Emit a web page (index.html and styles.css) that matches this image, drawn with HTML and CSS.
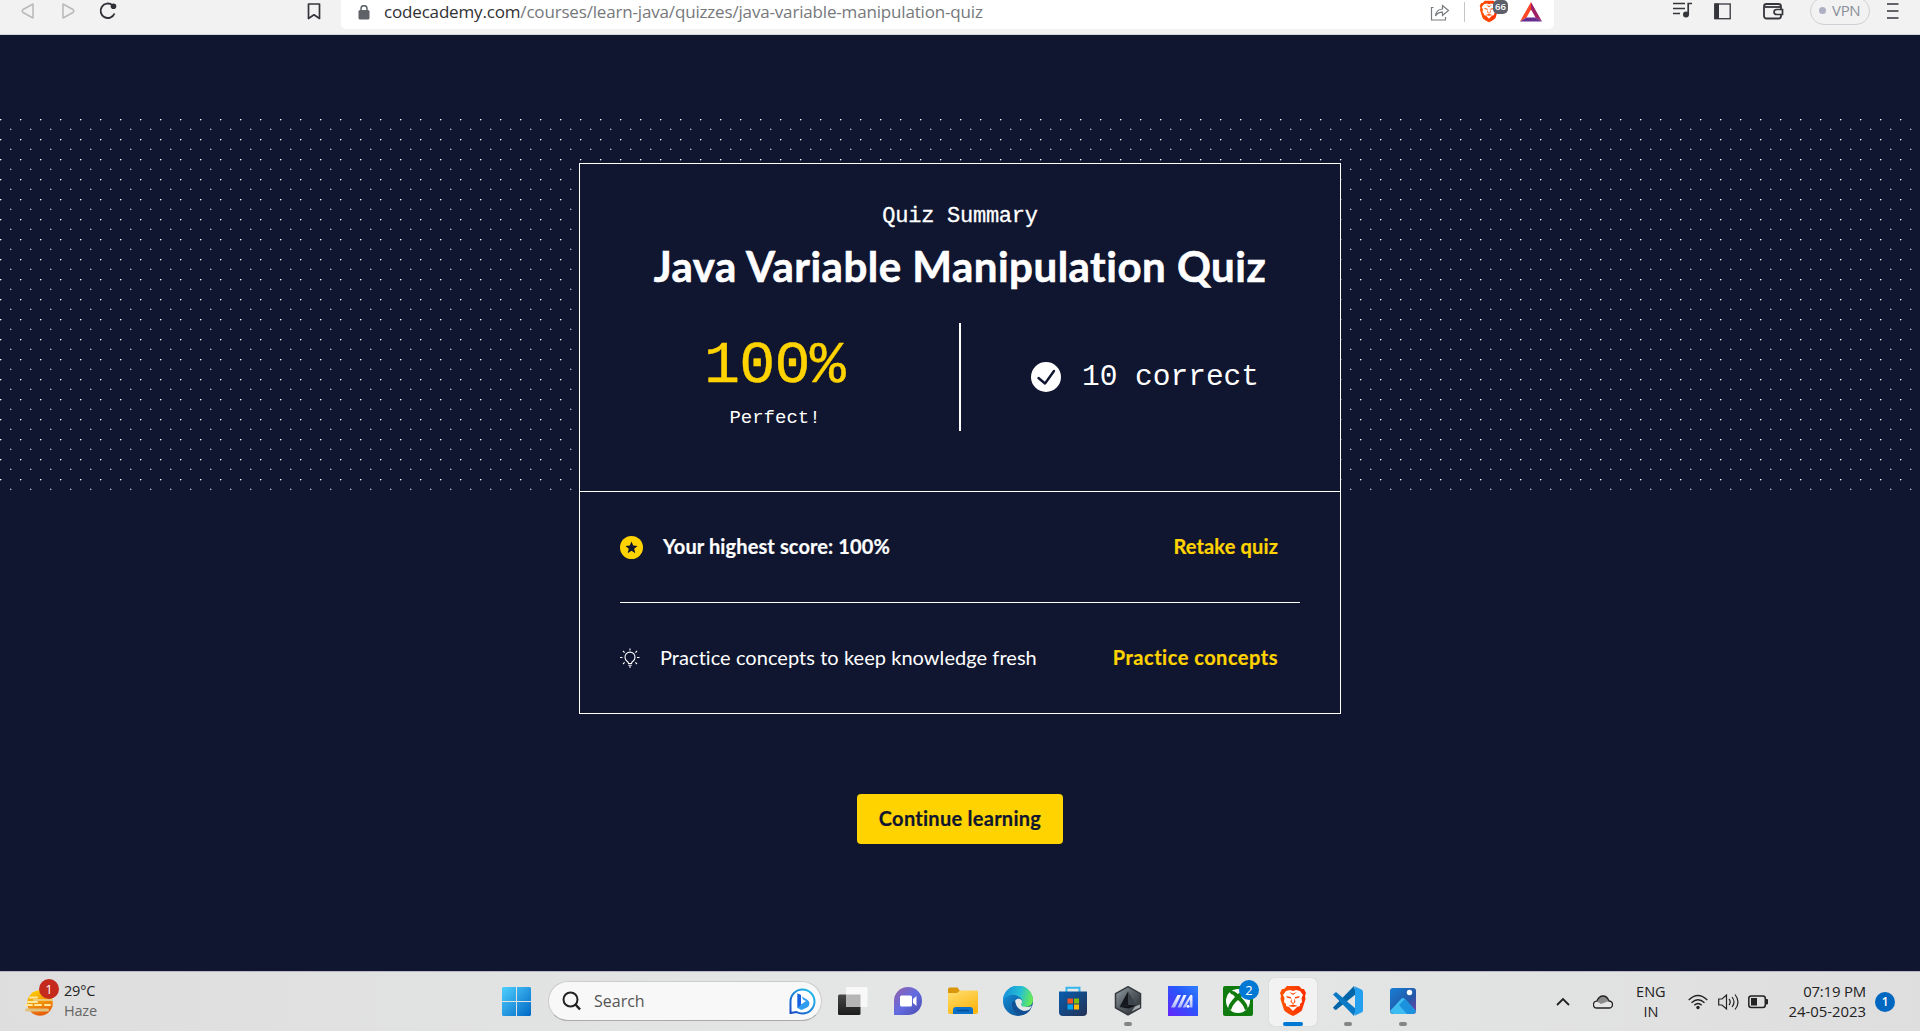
FILE: index.html
```html
<!DOCTYPE html>
<html lang="en">
<head>
<meta charset="utf-8">
<title>Java Variable Manipulation Quiz</title>
<link rel="stylesheet" href="styles.css">
</head>
<body>
<header class="toolbar">
  <nav class="nav-buttons">
    <svg class="ico back" width="14" height="18" viewBox="0 0 14 18"><path d="M12 2v14L2 10.500Q.5 9 2 7.500Z" fill="none" stroke="#b9b9b9" stroke-width="1.500" stroke-linejoin="round"/></svg>
    <svg class="ico forward" width="14" height="18" viewBox="0 0 14 18"><path d="M2 2v14l10-5.500q1.500-1.500 0-3Z" fill="none" stroke="#b9b9b9" stroke-width="1.500" stroke-linejoin="round"/></svg>
    <svg class="ico reload" width="18" height="18" viewBox="0 0 18 18"><path d="M13.500 3.300A7.200 7.200 0 1 0 15.500 11.500" fill="none" stroke="#303136" stroke-width="1.900"/><circle cx="14.500" cy="4.200" r="2.800" fill="#303136"/></svg>
    <svg class="ico bookmark" width="14" height="17" viewBox="0 0 14 17"><path d="M1.500 1h11v14.500L7 11.800l-5.500 3.700Z" fill="none" stroke="#34363b" stroke-width="1.700" stroke-linejoin="round"/></svg>
  </nav>
  <div class="address">
    <svg class="lock" width="12" height="15" viewBox="0 0 12 15"><rect x=".5" y="5" width="11" height="9.500" rx="1.500" fill="#5f6368"/><path d="M3 6V3.700a3 3 0 0 1 6 0V6" fill="none" stroke="#5f6368" stroke-width="1.500"/></svg>
    <span class="url"><span class="host">codecademy.com</span>/courses/learn-java/quizzes/java-variable-manipulation-quiz</span>
    <svg class="share" width="20" height="18" viewBox="0 0 20 18"><path d="M3.500 4.500H1.500v12.500h14V14M5.500 13q.5-6.500 7-7V2.500l6 5-6 5V9.200Q8 9 5.500 13Z" fill="none" stroke="#777a7e" stroke-width="1.200"/></svg>
    <i class="split"></i>
    <div class="shield">
      <svg width="20" height="23" viewBox="1.500 0 27 32"><use href="#lion"/></svg>
      <b>66</b>
    </div>
    <svg class="bat" width="22" height="20" viewBox="0 0 22 20"><path d="M11 0 0 19.500 6.500 15.500 11 7.500Z" fill="#ff4724"/><path d="M11 0 22 19.500 15.500 15.500 11 7.500Z" fill="#9e1f63"/><path d="M0 19.500H22L15.500 15.500H6.500Z" fill="#662d91"/></svg>
  </div>
  <svg class="ico music" width="20" height="17" viewBox="0 0 20 17"><path d="M0 1.500h12M0 6.500h12M0 11.500h7" stroke="#34363b" stroke-width="1.700"/><circle cx="13" cy="12.500" r="3" fill="#34363b"/><path d="M15.200 13V1.500H19" fill="none" stroke="#34363b" stroke-width="1.700"/></svg>
  <svg class="ico panel" width="17" height="17" viewBox="0 0 17 17"><rect x=".8" y="1" width="15.400" height="14.700" fill="none" stroke="#34363b" stroke-width="1.300"/><path d="M.5.500h4.500v15.500H.5Z" fill="#34363b"/></svg>
  <svg class="ico wallet" width="21" height="18" viewBox="0 0 21 18"><rect x="1" y="2" width="17" height="14.500" rx="2.500" fill="none" stroke="#34363b" stroke-width="1.800"/><path d="M2 5h16" stroke="#34363b" stroke-width="1.800"/><path d="M19.500 7.500H14q-3 0-3 2.500t3 2.500h5.500Z" fill="#f2f2f2" stroke="#34363b" stroke-width="1.700"/></svg>
  <div class="vpn"><i></i>VPN</div>
  <svg class="ico menu" width="12" height="17" viewBox="0 0 12 17"><path d="M0 2h11.500M0 9h11.500M0 16h11.500" stroke="#34363b" stroke-width="1.600"/></svg>
</header>

<main class="page">
  <svg class="dots" width="1920" height="374">
    <defs><pattern id="grid" width="20" height="20" patternUnits="userSpaceOnUse"><g fill="#fff"><path d="M0 0h1v1H0Z"/><path d="M1 0h1v1H1ZM0 1h1v1H0Z" opacity=".35"/><path d="M10 10h1v1h-1Z" opacity=".65"/><path d="M10 9h1v1h-1ZM11 10h1v1h-1Z" opacity=".3"/></g></pattern></defs>
    <rect width="1920" height="374" fill="url(#grid)"/>
  </svg>
  <section class="card">
    <div class="summary">
      <p class="eyebrow">Quiz Summary</p>
      <h1>Java Variable Manipulation Quiz</h1>
      <div class="results">
        <div class="score">
          <strong>100%</strong>
          <span>Perfect!</span>
        </div>
        <div class="tally">
          <svg width="30" height="30" viewBox="0 0 30 30"><circle cx="15" cy="15" r="15" fill="#fff"/><path d="m7.500 16 6.500 5.500L23 9" fill="none" stroke="#10162f" stroke-width="2.400" stroke-linecap="round" stroke-linejoin="round"/></svg>
          <span>10 correct</span>
        </div>
      </div>
    </div>
    <div class="row">
      <svg class="star" width="23" height="23" viewBox="0 0 23 23"><circle cx="11.500" cy="11.500" r="11.500" fill="#ffd300"/><path d="m11.500 5.500 1.700 4.100 4.400.300-3.400 2.900 1.100 4.400-3.800-2.400-3.800 2.400 1.100-4.400-3.400-2.900 4.400-.300Z" fill="#10162f"/></svg>
      <span class="label best">Your highest score: 100%</span>
      <a class="retake">Retake quiz</a>
    </div>
    <div class="row second">
      <svg class="bulb" width="20" height="20" viewBox="0 0 20 20" fill="none" stroke="#fff" stroke-width="1.100"><path d="M8.500 15.500q0-1.500-1.700-2.500a5 5 0 1 1 6.400 0q-1.700 1-1.700 2.500Z"/><path d="M8.300 17.300h3.400M9 19h2M10 .500v2M0 9.500h2.500M17 9.500h2.500M3 3l1.600 1.600M17 3l-1.600 1.600M3 16l1.600-1.600M17 16l-1.600-1.600"/></svg>
      <span class="label practice">Practice concepts to keep knowledge fresh</span>
      <a class="concepts">Practice concepts</a>
    </div>
  </section>
  <button class="continue">Continue learning</button>
</main>

<footer class="taskbar">
  <div class="weather">
    <div class="haze">
      <svg width="34" height="40" viewBox="0 0 34 40"><defs><linearGradient id="sun" x1="0" y1="0" x2=".3" y2="1"><stop stop-color="#ffd800"/><stop offset="1" stop-color="#e8620c"/></linearGradient></defs><circle cx="15" cy="21" r="12.800" fill="url(#sun)"/><path d="M5 15.500h7M3 20h9M20 23h5M10 23h6M1 23h6" stroke="#ffe9a0" stroke-width="2" stroke-linecap="round"/><path d="M1.500 28h21" stroke="#dfc27e" stroke-width="3" stroke-linecap="round"/><path d="M8 18h20" stroke="#e9d79d" stroke-width="1.500"/></svg>
      <b class="alert">1</b>
    </div>
    <p>29°C<br><span>Haze</span></p>
  </div>
  <div class="start"><svg width="29" height="29" viewBox="0 0 29 29"><defs><linearGradient id="win" x1="0" y1="0" x2="1" y2="1"><stop stop-color="#4fd0ff"/><stop offset="1" stop-color="#0067c5"/></linearGradient></defs><path d="M1 0h13v14H0V1ZM15 0h13l1 1v13H15ZM0 15h14v14H1l-1-1ZM15 15h14v13l-1 1H15Z" fill="url(#win)"/></svg></div>
  <div class="search">
    <svg width="20" height="20" viewBox="0 0 20 20"><circle cx="8.500" cy="8.500" r="7" fill="none" stroke="#222" stroke-width="2"/><path d="m13.500 13.500 4.500 5" stroke="#222" stroke-width="2.500"/></svg>
    <span>Search</span>
    <svg class="bing" width="27" height="27" viewBox="0 0 27 27"><defs><linearGradient id="bing" x1="1" y1="0" x2="0" y2="1"><stop stop-color="#22c8ef"/><stop offset="1" stop-color="#1746c4"/></linearGradient></defs><path d="M1.500 25V13.500A12 12 0 1 1 13.500 25.500Q10 25.500 7.500 24Z" fill="#fff" stroke="url(#bing)" stroke-width="2" stroke-linejoin="round"/><path d="M8.500 5.500 12 7v9.500L17 13l-3-1.500-1.200-3L18 11.500q2.500 1.500 2.500 4t-2.500 4L12.500 22 8.500 20Z" fill="#2f9cf0"/><path d="M8.500 5.500 12 7v9.500L8.500 20Z" fill="#1a5fe0"/></svg>
  </div>
  <div class="apps">
    <div class="app"><svg width="30" height="30" viewBox="0 0 30 30"><defs><linearGradient id="dark" x1="0" y1="0" x2="0" y2="1"><stop stop-color="#484848"/><stop offset="1" stop-color="#1c1c1c"/></linearGradient></defs><rect y="8.500" width="22.500" height="20.500" rx="1.500" fill="url(#dark)"/><rect x="8" y="1" width="21.500" height="20" rx="1" fill="#f8f8f8"/><path d="M8 8.500h14.500V21H8Z" fill="#b5b5b5"/></svg></div>
    <div class="app"><svg width="30" height="30" viewBox="0 0 30 30"><defs><linearGradient id="chat" x1="0" y1="0" x2="1" y2="1"><stop stop-color="#9561a7"/><stop offset=".5" stop-color="#626be1"/><stop offset="1" stop-color="#4b4dae"/></linearGradient></defs><path d="M1 29V15A14 14 0 1 1 15 29Z" fill="url(#chat)"/><rect x="7" y="9.500" width="12" height="11" rx="1.500" fill="#fff"/><path d="m20 13 3.500-3v10L20 17Z" fill="#fff"/></svg></div>
    <div class="app"><svg width="30" height="30" viewBox="0 0 30 30"><defs><linearGradient id="folder" x1="0" y1="0" x2=".5" y2="1"><stop stop-color="#ffdf70"/><stop offset="1" stop-color="#fdb714"/></linearGradient></defs><path d="M0 3q0-1.500 2-1.500h7.500L12 5H28v5H0Z" fill="#d99608"/><path d="M0 7h9l3-2.500h17q1 0 1 1.500v20q0 2-2 2H2q-2 0-2-2Z" fill="url(#folder)"/><path d="M5 28v-4q0-3 3-3h14q3 0 3 3v4Z" fill="#0a72cb"/><path d="M9 24.500h12" stroke="#064d93" stroke-width="1.500"/></svg></div>
    <div class="app"><svg width="30" height="30" viewBox="0 0 30 30"><defs><linearGradient id="edge" x1="0" y1=".3" x2="1" y2=".5"><stop stop-color="#168edb"/><stop offset=".55" stop-color="#24bed5"/><stop offset="1" stop-color="#69ed52"/></linearGradient><linearGradient id="edge2" x1="0" y1="0" x2="1" y2="1"><stop stop-color="#1597e2"/><stop offset="1" stop-color="#0b4384"/></linearGradient></defs><circle cx="15" cy="15" r="15" fill="url(#edge2)"/><path d="M0 15A15 15 0 0 1 30 14q-.2 7-8 7-5 0-4-2.500 3-4-1-7Q11 7 5 10 1 12 0 15Z" fill="url(#edge)"/><path d="M12 15a4 4 0 0 1 6.500-1q1.500 2-.500 4.500Q18 21 24 21q3 0 5-1.500-2 5-6 5.500-9 0-11-10Z" fill="#e5e6e6"/><path d="M9 18q0 9 9 11 6-.500 10-6-3 2.500-8 2-8-2-8-10Q9 15 9 18Z" fill="#124f93"/></svg></div>
    <div class="app"><svg width="30" height="30" viewBox="0 0 30 30"><defs><linearGradient id="store" x1="0" y1="0" x2="1" y2="1"><stop stop-color="#075daf"/><stop offset="1" stop-color="#233153"/></linearGradient></defs><path d="M8.500 7V1.700h13V7" fill="none" stroke="#35b6ec" stroke-width="2"/><path d="M1 5.500h28V26q0 4-4 4H5q-4 0-4-4Z" fill="url(#store)"/><path d="M9.500 12.500H15v5H9.500Z" fill="#f35325"/><path d="M16 12.500h5v5h-5Z" fill="#81bc06"/><path d="M9.500 18.500H15v5H9.500Z" fill="#05a6f0"/><path d="M16 18.500h5v5h-5Z" fill="#ffba08"/></svg></div>
    <div class="app running"><svg width="30" height="30" viewBox="0 0 30 30"><defs><linearGradient id="hex" x1="0" y1="0" x2="1" y2="1"><stop stop-color="#98a3a9"/><stop offset=".45" stop-color="#596167"/><stop offset="1" stop-color="#25292d"/></linearGradient></defs><path d="m15 .700 12.500 7v14L15 29 2.500 21.700v-14Z" fill="url(#hex)" stroke="#34393e" stroke-width="1.500"/><path d="M15 5.500 6.500 21l9-2Z" fill="#14181c"/><path d="m15 5.500 8.500 14-8-.5Z" fill="#3b434b"/><path d="m6.500 21 9-2 8 .5-8 3Z" fill="#111417"/><path d="m18.500 25.500 8.500-4v-3l-5 2Z" fill="#a5aaad"/></svg></div>
    <div class="app"><svg width="30" height="30" viewBox="0 0 30 30"><defs><linearGradient id="asus" x1="0" y1="1" x2="1" y2="0"><stop stop-color="#6425fa"/><stop offset=".6" stop-color="#2858fb"/><stop offset="1" stop-color="#2f80ff"/></linearGradient><linearGradient id="bar" x1="0" y1="0" x2="0" y2="1"><stop stop-color="#fff"/><stop offset="1" stop-color="#a9b4ff"/></linearGradient></defs><path d="M0 0h30v30H0Z" fill="url(#asus)"/><path d="M3 21.500 9.500 9h3.500L7 21.500ZM9.500 21.500 15.500 9h3L13 21.500ZM14.500 21.500 22 9.500q2.500-2 2.500 1v11h-2.700v-8L17.500 21.500Z" fill="url(#bar)"/><circle cx="20" cy="20.300" r="1.500" fill="#fff"/></svg></div>
    <div class="app"><svg width="30" height="30" viewBox="0 0 30 30"><rect width="30" height="30" rx="2" fill="#107c10"/><circle cx="15" cy="15" r="12" fill="#fff"/><path d="M6 5q5-1 9 3 4-4 9-3l-2 3q-2 0-4 3 7 7 7 12l-3 1q-2-6-7-10-5 4-7 10l-3-1q0-5 7-12-2-3-4-3Z" fill="#107c10"/></svg><b class="count">2</b></div>
    <div class="app active"><svg width="30" height="32" viewBox="0 0 30 32"><defs><linearGradient id="flame" x1="0" y1="0" x2="1" y2="0"><stop stop-color="#ff5500"/><stop offset="1" stop-color="#ff2d00"/></linearGradient><g id="lion"><path d="M9 1h12l3 3h2l2 4-1 3 .5 3L24 25q-1 2-9 6-8-4-9-6L2.500 14l.500-3-1-3 2-4h2Z" fill="url(#flame)"/><path d="m8 6 4-1 3 1 3-1 4 1 3 4-1.500 3 .5 4-2 2v2l-3 1-4 4-4-4-3-1v-2l-2-2 .5-4L5 10Z" fill="#fff"/><path d="m8 11 5 1v1.500L9.500 13ZM22 11l-5 1v1.500l3.500-.5ZM13.500 13l-1 4L15 19l2.500-2-1-4-.3 4L15 18l-1.200-1ZM10 21l5-1.500 5 1.500-5 1ZM11 7l4 1.500L19 7l-4 3Z" fill="#ff4500"/></g></defs><use href="#lion"/></svg></div>
    <div class="app running"><svg width="30" height="30" viewBox="0 0 30 30"><path d="m21 0 2 8L3 24q-1.500 0-3-2.500Z" fill="#0065a9"/><path d="M0 8.500 3 6l20 17-2 7Z" fill="#0879c4"/><path d="m21 0 7.500 3.500Q30 4 30 6v18q0 2-1.500 2.500L21 30l1-1V1Z" fill="#24a0ef"/></svg></div>
    <div class="app running"><svg width="30" height="30" viewBox="0 0 30 30"><defs><linearGradient id="photo" x1="0" y1="0" x2="1" y2="1"><stop stop-color="#167fd4"/><stop offset=".6" stop-color="#2459a9"/><stop offset="1" stop-color="#7b3da3"/></linearGradient></defs><rect x="2" y="2" width="26" height="26" rx="3" fill="url(#photo)"/><path d="m2 25 11-12q2-2 4 0l11 12q-1 3-4 3H6q-3 0-4-3Z" fill="#3dbcf1"/><path d="m17 13 11 12q-1 3-4 3h-5l-8-9 6-6Z" fill="#1c91dd"/><circle cx="21.500" cy="6.500" r="2.700" fill="#fff"/></svg></div>
  </div>
  <div class="tray">
    <svg class="chev" width="14" height="9" viewBox="0 0 14 9"><path d="m1 8 6-6 6 6" fill="none" stroke="#222" stroke-width="1.800"/></svg>
    <svg class="cloud" width="20" height="14" viewBox="0 0 20 14"><path d="M4 13a3.400 3.400 0 0 1-.3-6.800Q6 1 10 1t6 5A3.500 3.500 0 0 1 16 13Z" fill="#e5e5e5"/><path d="M3.700 6.200Q6 1 10 1t6 5L8 9Z" fill="#8b8b8b"/><path d="M4 13a3.400 3.400 0 0 1-.3-6.800Q6 1 10 1t6 5A3.500 3.500 0 0 1 16 13Z" fill="none" stroke="#222" stroke-width="1.300"/></svg>
    <p class="lang">ENG<br>IN</p>
    <svg class="wifi" width="20" height="16" viewBox="0 0 20 16" fill="none" stroke="#222" stroke-width="1.300"><path d="M.7 6Q10-3 19.300 6M3.500 8.800q6.500-6 13 0M6.300 11.300q3.700-3.500 7.400 0"/><circle cx="10" cy="13.500" r="1.700" fill="#222" stroke="none"/></svg>
    <svg class="sound" width="21" height="18" viewBox="0 0 21 18" fill="none" stroke="#222" stroke-width="1.200"><path d="M.7 6H4l4.500-4v14L4 12H.7ZM11 6q2.500 3 0 6M14 4q4 5 0 10M17 1.500q6 7.500 0 15"/></svg>
    <svg class="battery" width="21" height="14" viewBox="0 0 21 14"><rect x=".8" y="1" width="16.500" height="11.500" rx="2.500" fill="none" stroke="#222" stroke-width="1.500"/><path d="M3 3h6v7.500H3ZM18 4h1q1 0 1 1v3.500q0 1-1 1h-1Z" fill="#222"/></svg>
    <p class="clock"><span class="time">07:19 PM</span><br><span class="date">24-05-2023</span></p>
    <b class="notice">1</b>
  </div>
</footer>
</body>
</html>
```
FILE: styles.css
```css
* { box-sizing: border-box; }
body { margin: 0; width: 1920px; height: 1031px; overflow: hidden; display: flex; flex-direction: column; background: #10162f; font-family: Lato, sans-serif; font-variant-ligatures: none; }
p, h1 { margin: 0; }
svg { display: block; flex: none; }

/* Browser toolbar */
.toolbar { height: 35px; flex: none; display: flex; align-items: flex-start; background: #f2f2f2; border-bottom: 1px solid #d0d5da; font-family: "Open Sans", sans-serif; }
.nav-buttons { width: 341px; display: flex; flex: none; }
.ico { margin-top: 2px; }
.back { margin-left: 21px; }
.forward { margin-left: 26px; }
.reload { margin-left: 24px; }
.bookmark { margin-left: 190px; margin-top: 3px; }
.address { width: 1213px; height: 29px; flex: none; display: flex; align-items: flex-start; background: #fff; border-radius: 0 0 5px 5px; }
.lock { margin: 5px 0 0 17px; }
.url { width: 1048px; margin-left: 14px; font-size: 17px; line-height: 24px; letter-spacing: -.17px; color: #76787b; white-space: nowrap; }
.host { color: #303135; }
.share { margin: 3px 0 0 -2px; }
.split { width: 1px; height: 20px; margin: 2px 0 0 14px; background: #c5c5c5; }
.shield { position: relative; width: 20px; margin-left: 14px; }
.shield b { position: absolute; left: 14px; top: 0; width: 15px; height: 14px; border-radius: 5px; background: #5d606b; color: #fff; font-size: 9.500px; font-weight: 600; line-height: 14px; text-align: center; }
.bat { margin: 2px 0 0 21px; }
.music { margin-left: 119px; }
.panel { margin: 3px 0 0 21px; }
.wallet { margin-left: 32px; }
.vpn { width: 60px; height: 28px; margin: -3px 0 0 26px; padding: 0 0 2px 8px; display: flex; align-items: center; gap: 6px; border: 1px solid #cdd0d4; border-radius: 14px; color: #8a8f99; font-size: 15px; letter-spacing: -.3px; }
.vpn i { width: 7px; height: 7px; border-radius: 50%; background: #adafc2; }
.menu { margin-left: 17px; }

/* Quiz page */
.page { position: relative; flex: 1; display: flex; flex-direction: column; align-items: center; padding-top: 128px; }
.dots { position: absolute; left: 0; top: 84px; }
.card { position: relative; width: 762px; height: 551px; border: 1px solid #fff; background: #10162f; color: #fff; }
.summary { height: 328px; border-bottom: 1px solid #fff; text-align: center; padding-top: 38px; }
.eyebrow { font: 22px/30px "Liberation Mono", monospace; letter-spacing: -.25px; -webkit-text-stroke: .3px #fff; }
h1 { font-size: 42px; line-height: 60px; margin-top: 4px; font-weight: 700; letter-spacing: .5px; white-space: nowrap; -webkit-text-stroke: .6px #fff; }
.results { height: 108px; margin-top: 27px; display: grid; grid-template-columns: 381px 379px; font-family: "Liberation Mono", monospace; }
.score { display: flex; flex-direction: column; align-items: center; border-right: 2px solid #fff; padding-top: 13px; padding-left: 12px; }
.score strong { color: #ffd300; font-size: 60px; font-weight: 400; line-height: 60px; letter-spacing: -.7px; margin-right: 2px; -webkit-text-stroke: .4px #ffd300; }
.score span { font-size: 19px; line-height: 24px; margin-top: 10px; margin-right: 1px; }
.tally { display: flex; align-items: center; padding-left: 70px; gap: 21px; }
.tally span { font-size: 29.500px; line-height: 34px; margin-top: -1px; }
.row { height: 110px; margin: 0 40px; display: flex; align-items: center; font-size: 20px; line-height: 28px; white-space: nowrap; }
.second { height: 111px; border-top: 1px solid #fff; }
.row a, .row span { padding-bottom: 2px; }
.row a { margin-left: auto; margin-right: 22px; font-weight: 700; color: #ffd300; }
.row a, .best, .continue { -webkit-text-stroke: .2px; }
.retake { letter-spacing: .15px; }
.concepts { letter-spacing: .5px; }
.best { margin-left: 20px; font-weight: 700; letter-spacing: .12px; }
.practice { margin-left: 20px; letter-spacing: .05px; }
.continue { width: 206px; height: 50px; margin-top: 80px; padding: 0 0 2px; border: 0; border-radius: 4px; background: #ffd300; color: #10162f; font: 700 20px Lato, sans-serif; font-variant-ligatures: none; letter-spacing: .27px; white-space: nowrap; }

/* Taskbar */
.taskbar { height: 60px; flex: none; display: flex; align-items: center; background: linear-gradient(90deg, #dedede, #e4e5e5 45%, #e4e5e5 65%, #dedede); border-top: 1px solid #b9bac1; color: #222; font-family: "Open Sans", sans-serif; font-size: 15px; line-height: 20px; white-space: nowrap; }
.weather { width: 488px; flex: none; display: flex; align-items: center; }
.haze { position: relative; margin-left: 25px; width: 39px; height: 40px; }
.haze b { position: absolute; left: 14px; top: -3px; width: 20px; height: 20px; border-radius: 50%; background: #c42b1c; color: #fff; text-align: center; font-size: 13px; font-weight: 400; }
.weather p { font-size: 14.500px; letter-spacing: -.2px; margin-top: -2px; }
.weather p span { color: #666; }
.start { width: 56px; display: grid; place-items: center; }
.search { width: 274px; height: 40px; margin: -1px 4px 0; padding: 0 5px 0 13px; display: flex; align-items: center; border: 1px solid #ccc; border-bottom-color: #aaa; border-radius: 20px; background: #f8f8f8; font-size: 16px; color: #555; }
.search span { margin-left: 12px; }
.bing { margin-left: auto; }
.apps { display: flex; flex: none; margin-left: -1px; }
.app { position: relative; width: 55px; height: 48px; padding-bottom: 2px; display: grid; place-items: center; }
.running::after, .active::after { content: ""; position: absolute; left: 24px; bottom: 0; width: 8px; height: 4px; border-radius: 2px; background: #858585; }
.active { width: 48px; margin: 0 3px 0 4px; background: #f2f2f2; border-radius: 5px; box-shadow: 0 0 1px #aaa; }
.active::after { left: 14px; width: 20px; background: #0078d4; }
.count { position: absolute; left: 29px; top: 2px; width: 20px; height: 20px; border-radius: 50%; background: #0078d4; color: #fff; text-align: center; font-size: 13px; font-weight: 400; }
.tray { width: 490px; display: flex; align-items: center; }
.chev { margin-left: 126px; }
.cloud { margin-left: 23px; }
.lang { width: 40px; margin-left: 18px; text-align: center; font-size: 14.500px; }
.wifi { margin-left: 17px; }
.sound { margin-left: 10px; }
.battery { margin-left: 9px; }
.clock { width: 98px; margin: -2px 0 0 auto; text-align: right; font-size: 14.900px; }
.time { letter-spacing: -.15px; }
.notice { width: 20px; height: 20px; margin: 0 25px 0 9px; border-radius: 50%; background: #0067c0; color: #fff; text-align: center; font-size: 12px; font-weight: 600; }
```
